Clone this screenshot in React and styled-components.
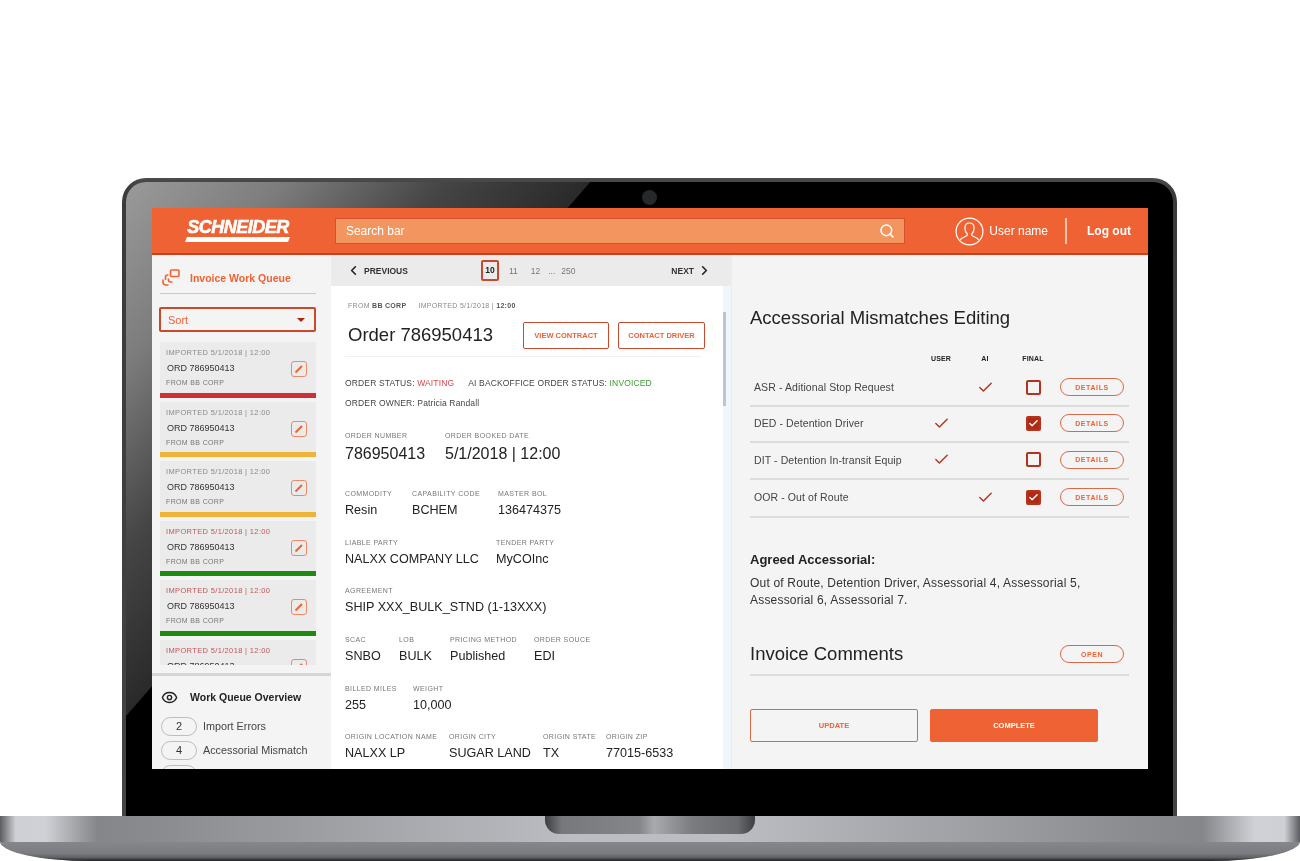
import React from 'react';
import styled, { createGlobalStyle } from 'styled-components';
import { ChevronLeft, ChevronRight, Search, Eye, Check } from 'lucide-react';

const GlobalStyle = createGlobalStyle`
  html, body { margin: 0; padding: 0; background: #fff; }
  body { font-family: "Liberation Sans", Arial, sans-serif; }
  * { box-sizing: border-box; }
`;

const orange = '#ef6234';
const rust = '#c9492a';

const Page = styled.div`
  width: 1300px;
  height: 861px;
  padding-top: 178px;
  overflow: hidden;
  background: #fff;
`;

const Lid = styled.div`
  position: relative;
  width: 1055px;
  height: 638px;
  margin-left: 122px;
  padding: 4px 4px 0 4px;
  border-radius: 24px 24px 0 0;
  background: linear-gradient(180deg, #4c4c4c 0, #3b3b3b 12px, #444 100%);
`;

const Bezel = styled.div`
  height: 100%;
  padding: 26px 25px 0 26px;
  border-radius: 20px 20px 0 0;
  background: linear-gradient(131deg, #9a9a9a 0%, #7c7c7c 10%, #454545 20%, #2a2a2a 29%, #000 29.1%);
`;

const Camera = styled.div`
  position: absolute;
  top: 12px;
  left: 520px;
  width: 15px;
  height: 15px;
  border-radius: 50%;
  background: #26282c;
`;

const Screen = styled.div`
  width: 996px;
  height: 561px;
  display: flex;
  flex-direction: column;
  overflow: hidden;
  background: #f4f4f4;
  filter: blur(0.35px);
`;

const Header = styled.header`
  flex: 0 0 47px;
  display: flex;
  align-items: center;
  padding: 1px 17px 0 34px;
  background: ${orange};
  border-bottom: 2px solid #c8401c;
`;

const Logo = styled.div`
  position: relative;
  width: 104px;
  height: 22px;
  color: #fff;
  font-size: 18px;
  line-height: 15px;
  font-weight: 700;
  font-style: italic;
  letter-spacing: -0.5px;
  -webkit-text-stroke: 0.6px #fff;
  white-space: nowrap;
  text-align: center;

  &::after {
    content: '';
    position: absolute;
    left: 0;
    right: 1px;
    bottom: 0;
    height: 5px;
    background: #fff;
    transform: skewX(-20deg);
  }
`;

const SearchBar = styled.div`
  width: 571px;
  height: 26px;
  margin-left: 45px;
  padding: 0 9px 0 10px;
  display: flex;
  align-items: center;
  justify-content: space-between;
  background: #f2955f;
  border: 1px solid #d4522c;
  color: #fff;
  font-size: 12px;
`;

const User = styled.div`
  display: flex;
  align-items: center;
  gap: 5px;
  margin-left: 50px;
  color: #fff;
  font-size: 12px;
  white-space: nowrap;
`;

const HeaderRule = styled.div`
  width: 2px;
  height: 26px;
  margin: 0 20px 0 17px;
  background: #f8c3a8;
`;

const LogOut = styled.div`
  color: #fff;
  font-size: 12px;
  font-weight: 700;
  white-space: nowrap;
`;

const Body = styled.div`
  flex: 1;
  min-height: 0;
  display: grid;
  grid-template-columns: 179px 400px 417px;
`;

const Sidebar = styled.aside`
  display: flex;
  flex-direction: column;
  min-height: 0;
  overflow: hidden;
  background: #f4f4f4;
`;

const QueuePane = styled.div`
  flex: 0 0 410px;
  padding: 0 15px 0 7px;
  overflow: hidden;
`;

const QueueTitle = styled.div`
  height: 39px;
  margin: 0 0 13px 1px;
  display: flex;
  align-items: center;
  gap: 10px;
  padding: 7px 0 0 2px;
  border-bottom: 1px solid #c9c9c9;
  color: ${orange};
  font-size: 10.5px;
  font-weight: 700;
`;

const Sort = styled.div`
  height: 25px;
  margin-bottom: 10px;
  padding: 0 9px 0 7px;
  display: flex;
  align-items: center;
  justify-content: space-between;
  border: 2px solid ${rust};
  border-radius: 2px;
  color: ${orange};
  font-size: 11px;
`;

const Caret = styled.span`
  width: 0;
  height: 0;
  border-left: 4px solid transparent;
  border-right: 4px solid transparent;
  border-top: 4px solid #b3200f;
`;

const Card = styled.div`
  position: relative;
  width: 156px;
  margin: 0 0 4px 1px;
  height: 55.5px;
  padding: 6px 0 0 6px;
  background: #ebebeb;
  border-bottom: 5px solid ${p => p.$bar};
`;

const CardStamp = styled.div`
  color: ${p => (p.$alert ? '#c0575a' : '#8a8a8a')};
  font-size: 7.5px;
  line-height: 10px;
  letter-spacing: 0.35px;
  white-space: nowrap;
`;

const CardOrder = styled.div`
  margin-top: 5px;
  margin-left: 1px;
  color: #333;
  font-size: 9px;
  line-height: 11px;
`;

const CardFrom = styled.div`
  margin-top: 4px;
  color: #777;
  font-size: 7px;
  line-height: 9px;
  letter-spacing: 0.35px;
`;

const EditBox = styled.div`
  position: absolute;
  top: 19px;
  right: 9px;
  width: 16px;
  height: 16px;
  border: 1.5px solid #ec8a68;
  border-radius: 3px;
  display: flex;
  align-items: center;
  justify-content: center;
`;

const Overview = styled.div`
  flex: 1;
  margin-top: 8px;
  padding: 14px 0 0 9px;
  border-top: 3px solid #d6d6d6;
`;

const OverviewTitle = styled.div`
  display: flex;
  align-items: center;
  gap: 12px;
  margin-bottom: 12px;
  color: #222;
  font-size: 10.5px;
  font-weight: 700;
  height: 14px;
`;

const CountRow = styled.div`
  display: flex;
  align-items: center;
  gap: 6px;
  height: 20px;
  margin-bottom: 4px;
  color: #444;
  font-size: 10.8px;
  white-space: nowrap;
`;

const CountPill = styled.span`
  width: 36px;
  height: 19px;
  border: 1px solid #bdbdbd;
  border-radius: 10px;
  text-align: center;
  line-height: 17px;
  color: #333;
  font-size: 11px;
`;

const Center = styled.main`
  position: relative;
  min-height: 0;
  overflow: hidden;
  background: #fff;
`;

const Pager = styled.div`
  height: 31px;
  padding: 0 19px 0 15px;
  display: flex;
  align-items: center;
  background: #ebebeb;
  color: #333;
  font-size: 8.5px;
  font-weight: 700;
`;

const PagerLink = styled.div`
  display: flex;
  align-items: center;
  gap: 3px;
`;

const Pages = styled.div`
  display: flex;
  align-items: center;
  margin-left: 73px;
  margin-right: auto;
  color: #777;
  font-size: 8.5px;
  font-weight: 400;
`;

const PageNum = styled.span`
  margin-left: ${p => p.$gap || 0}px;
  ${p => p.$current && `
    width: 18px;
    height: 21px;
    line-height: 17px;
    text-align: center;
    border: 2px solid ${rust};
    border-radius: 2px;
    color: #222;
    font-weight: 700;
  `}
`;

const Scrollbar = styled.div`
  position: absolute;
  top: 31px;
  right: 0;
  bottom: 0;
  width: 8px;
  padding-top: 26px;
  background: #f1f6fa;
`;

const ScrollThumb = styled.div`
  width: 3px;
  height: 94px;
  background: #b8c6d8;
`;

const Detail = styled.div`
  padding: 15px 20px 0 14px;
`;

const Crumb = styled.div`
  display: flex;
  gap: 12px;
  margin-left: 3px;
  height: 10px;
  color: #8a8a8a;
  font-size: 7px;
  line-height: 10px;
  letter-spacing: 0.3px;
  b { color: #555; }
`;

const OrderHead = styled.div`
  display: flex;
  align-items: center;
  gap: 9px;
  height: 34px;
  margin: 7px 0 4px 0;
  padding-left: 3px;
`;

const OrderTitle = styled.h1`
  flex: none;
  margin: 0 21px 0 0;
  width: 145px;
  white-space: nowrap;
  color: #222;
  font-size: 18.5px;
  font-weight: 400;
`;

const OutlineButton = styled.button`
  flex: none;
  width: ${p => p.$w}px;
  height: 27px;
  padding: 0;
  background: transparent;
  border: 1.5px solid ${rust};
  border-radius: 2px;
  color: ${orange};
  font: 700 7.5px "Liberation Sans", Arial, sans-serif;
`;

const HeadRule = styled.div`
  height: 1px;
  margin: 0 10px 19px 0;
  background: #f0f0f0;
`;

const StatusLine = styled.div`
  height: 20px;
  color: #444;
  font-size: 8.5px;
  line-height: 14px;
  letter-spacing: 0.15px;
  white-space: nowrap;
`;

const Status = styled.span`
  color: ${p => p.$c};
  margin-right: 14px;
`;

const FieldRow = styled.div`
  display: flex;
  margin-top: ${p => p.$top}px;
`;

const Field = styled.div`
  width: ${p => p.$w}px;
  flex: none;
  white-space: nowrap;
`;

const FieldLabel = styled.div`
  height: 11px;
  color: #777;
  font-size: 7px;
  line-height: 11px;
  letter-spacing: 0.4px;
`;

const FieldValue = styled.div`
  margin-top: ${p => (p.$big ? 4 : 3)}px;
  color: #222;
  font-size: ${p => (p.$big ? 16 : 12.6)}px;
  line-height: 17px;
`;

const Right = styled.section`
  padding: 52px 19px 0 18px;
  background: #f4f4f4;
  border-left: 1px solid #ececec;
`;

const PanelTitle = styled.h2`
  margin: 0;
  color: #222;
  font-size: 18.5px;
  font-weight: 400;
  line-height: 22px;
  white-space: nowrap;
`;

const TableHead = styled.div`
  display: grid;
  grid-template-columns: 169px 44px 44px 52px;
  margin-top: 26px;
  height: 16px;
  color: #222;
  font-size: 7px;
  font-weight: 700;
  text-align: center;
  letter-spacing: 0.2px;
`;

const Row = styled.div`
  display: grid;
  grid-template-columns: 169px 44px 44px 52px 66px;
  align-items: center;
  height: ${p => p.$h}px;
  padding-bottom: 2px;
  border-bottom: 2px solid #dcdcdc;
  color: #444;
  font-size: 10.5px;
  letter-spacing: 0.1px;
`;

const RowName = styled.span`
  padding-left: 4px;
  white-space: nowrap;
`;

const Cell = styled.span`
  display: flex;
  justify-content: center;
  align-items: center;
`;

const Box = styled.span`
  width: 15px;
  height: 15px;
  display: flex;
  align-items: center;
  justify-content: center;
  border: 2px solid #b5331e;
  border-radius: 2px;
  background: ${p => (p.$on ? '#ad2a14' : 'transparent')};
`;

const Pill = styled.button`
  width: 64px;
  height: 18px;
  padding: 0;
  background: transparent;
  border: 1.5px solid #d9694a;
  border-radius: 9px;
  color: ${orange};
  font: 700 7px "Liberation Sans", Arial, sans-serif;
  letter-spacing: 0.6px;
`;

const AgreedTitle = styled.div`
  margin-top: 34px;
  color: #222;
  font-size: 13px;
  font-weight: 700;
  line-height: 16px;
`;

const AgreedText = styled.p`
  margin: 7px 0 0;
  color: #333;
  font-size: 12px;
  line-height: 17px;
  letter-spacing: 0.19px;
  white-space: nowrap;
`;

const CommentsRow = styled.div`
  display: flex;
  align-items: center;
  justify-content: space-between;
  height: 36px;
  margin-top: 31px;
  padding: 0 5px 6px 0;
  border-bottom: 2px solid #dcdcdc;
`;

const Actions = styled.div`
  display: flex;
  gap: 12px;
  margin-top: 33px;
`;

const ActionButton = styled.button`
  width: 168px;
  height: 33px;
  padding: 0;
  background: ${p => (p.$primary ? orange : 'transparent')};
  border: 1.5px solid ${p => (p.$primary ? orange : '#d9694a')};
  border-radius: 2px;
  color: ${p => (p.$primary ? '#fff' : orange)};
  font: 700 7.5px "Liberation Sans", Arial, sans-serif;
`;

const Base = styled.div`
  position: relative;
  height: 45px;
  border-radius: 0 0 90px 90px / 0 0 20px 20px;
  overflow: hidden;
  background: linear-gradient(90deg, #5c5d61 0, #cfd0d5 1.2%, #d0d1d6 3.5%, #85868a 7.5%, #8a8b8f 12%, #bcbdc2 44%, #bcbdc2 56%, #8a8b8f 88%, #85868a 92.5%, #d0d1d6 96.5%, #cfd0d5 98.8%, #5c5d61 100%);
`;

const BaseLip = styled.div`
  position: absolute;
  left: 0;
  right: 0;
  top: 26px;
  bottom: 0;
  background: linear-gradient(180deg, #86878b 0%, #7b7c80 60%, #5f6064 82%, #1d1d20 100%);
`;

const Notch = styled.div`
  position: absolute;
  top: 0;
  left: 545px;
  width: 210px;
  height: 18px;
  border-radius: 0 0 14px 14px;
  background: linear-gradient(90deg, #3c3d41 0, #77787c 8%, #85868a 45%, #a9aaae 52%, #7b7c80 70%, #6a6b6f 92%, #3c3d41 100%);
`;

const queue = [
  { bar: '#cf3038' },
  { bar: '#efb437' },
  { bar: '#efb437' },
  { bar: '#1f8a10', alert: true },
  { bar: '#1f8a10', alert: true },
  { bar: '#1f8a10', alert: true },
];

const mismatches = [
  { name: 'ASR - Aditional Stop Request', ai: true, h: 36 },
  { name: 'DED - Detention Driver', user: true, on: true, h: 36 },
  { name: 'DIT - Detention In-transit Equip', user: true, h: 37 },
  { name: 'OOR - Out of Route', ai: true, on: true, h: 38 },
];

const fieldRows = [
  { top: 14, big: true, fields: [['ORDER NUMBER', '786950413', 100], ['ORDER BOOKED DATE', '5/1/2018 | 12:00', 150]] },
  { top: 26, fields: [['COMMODITY', 'Resin', 67], ['CAPABILITY CODE', 'BCHEM', 86], ['MASTER BOL', '136474375', 100]] },
  { top: 18, fields: [['LIABLE PARTY', 'NALXX COMPANY LLC', 151], ['TENDER PARTY', 'MyCOInc', 100]] },
  { top: 17, fields: [['AGREEMENT', 'SHIP XXX_BULK_STND (1-13XXX)', 300]] },
  { top: 18, fields: [['SCAC', 'SNBO', 54], ['LOB', 'BULK', 51], ['PRICING METHOD', 'Published', 84], ['ORDER SOUCE', 'EDI', 80]] },
  { top: 18, fields: [['BILLED MILES', '255', 68], ['WEIGHT', '10,000', 100]] },
  { top: 17, fields: [['ORIGIN LOCATION NAME', 'NALXX LP', 104], ['ORIGIN CITY', 'SUGAR LAND', 94], ['ORIGIN STATE', 'TX', 63], ['ORIGIN ZIP', '77015-6533', 80]] },
];

const QueueIcon = () => (
  <svg width="18" height="17" viewBox="0 0 18 17" fill="none" stroke={orange} strokeWidth="1.6">
    <rect x="8.500" y="1" width="8.500" height="6.500" rx="1" />
    <path d="M6.500 6H5.500a2 2 0 0 0-2 2v3M1 10.500v2.500a3 3 0 0 0 3 3h2.500M6.500 9.500v1.500a2 2 0 0 0 2 2h2" />
  </svg>
);

const UserIcon = () => (
  <svg width="29" height="29" viewBox="0 0 29 29" fill="none" stroke="#fff" strokeWidth="1.2">
    <circle cx="14.500" cy="14.500" r="13.400" />
    <path d="M14.500 6c-3 0-4.600 2.200-4.600 5 0 2.600 1 4.700 2.300 5.800v1.700L6.500 21.500c-.5.300-.8.800-.9 1.500M14.500 6c3 0 4.600 2.200 4.600 5 0 2.600-1 4.700-2.300 5.800v1.700l5.700 3c.5.300.8.800.9 1.500" />
  </svg>
);

const PencilIcon = () => (
  <svg width="10" height="10" viewBox="0 0 10 10" fill="none" stroke={orange} strokeWidth="2">
    <path d="M1.500 8.500L8 2" />
  </svg>
);

export default function App() {
  return (
    <Page>
      <GlobalStyle />
      <Lid>
        <Camera />
        <Bezel>
          <Screen>
            <Header>
              <Logo>SCHNEIDER</Logo>
              <SearchBar>
                Search bar
                <Search size={16} color="#fff" strokeWidth={2.2} />
              </SearchBar>
              <User>
                <UserIcon />
                User name
              </User>
              <HeaderRule />
              <LogOut>Log out</LogOut>
            </Header>
            <Body>
              <Sidebar>
                <QueuePane>
                  <QueueTitle>
                    <QueueIcon />
                    Invoice Work Queue
                  </QueueTitle>
                  <Sort>
                    Sort
                    <Caret />
                  </Sort>
                  {queue.map((item, i) => (
                    <Card key={i} $bar={item.bar}>
                      <CardStamp $alert={item.alert}>IMPORTED 5/1/2018 | 12:00</CardStamp>
                      <CardOrder>ORD 786950413</CardOrder>
                      <CardFrom>FROM BB CORP</CardFrom>
                      <EditBox>
                        <PencilIcon />
                      </EditBox>
                    </Card>
                  ))}
                </QueuePane>
                <Overview>
                  <OverviewTitle>
                    <Eye size={17} color="#222" strokeWidth={2} />
                    Work Queue Overview
                  </OverviewTitle>
                  <CountRow>
                    <CountPill>2</CountPill>
                    Import Errors
                  </CountRow>
                  <CountRow>
                    <CountPill>4</CountPill>
                    Accessorial Mismatch
                  </CountRow>
                  <CountRow>
                    <CountPill />
                  </CountRow>
                </Overview>
              </Sidebar>

              <Center>
                <Pager>
                  <PagerLink>
                    <ChevronLeft size={15} color="#222" strokeWidth={2.6} />
                    PREVIOUS
                  </PagerLink>
                  <Pages>
                    <PageNum $current>10</PageNum>
                    <PageNum $gap={10}>11</PageNum>
                    <PageNum $gap={13}>12</PageNum>
                    <PageNum $gap={8}>...</PageNum>
                    <PageNum $gap={6}>250</PageNum>
                  </Pages>
                  <PagerLink>
                    NEXT
                    <ChevronRight size={15} color="#222" strokeWidth={2.6} />
                  </PagerLink>
                </Pager>
                <Scrollbar>
                  <ScrollThumb />
                </Scrollbar>
                <Detail>
                  <Crumb>
                    <span>FROM <b>BB CORP</b></span>
                    <span>IMPORTED 5/1/2018 | <b>12:00</b></span>
                  </Crumb>
                  <OrderHead>
                    <OrderTitle>Order 786950413</OrderTitle>
                    <OutlineButton $w={86}>VIEW CONTRACT</OutlineButton>
                    <OutlineButton $w={87}>CONTACT DRIVER</OutlineButton>
                  </OrderHead>
                  <HeadRule />
                  <StatusLine>
                    ORDER STATUS: <Status $c="#e0454a">WAITING</Status>
                    AI BACKOFFICE ORDER STATUS: <Status $c="#3c9a32">INVOICED</Status>
                  </StatusLine>
                  <StatusLine>ORDER OWNER: Patricia Randall</StatusLine>
                  {fieldRows.map(row => (
                    <FieldRow key={row.fields[0][0]} $top={row.top}>
                      {row.fields.map(([label, value, w]) => (
                        <Field key={label} $w={w}>
                          <FieldLabel>{label}</FieldLabel>
                          <FieldValue $big={row.big}>{value}</FieldValue>
                        </Field>
                      ))}
                    </FieldRow>
                  ))}
                </Detail>
              </Center>

              <Right>
                <PanelTitle>Accessorial Mismatches Editing</PanelTitle>
                <TableHead>
                  <span />
                  <span>USER</span>
                  <span>AI</span>
                  <span>FINAL</span>
                </TableHead>
                {mismatches.map(m => (
                  <Row key={m.name} $h={m.h}>
                    <RowName>{m.name}</RowName>
                    <Cell>{m.user && <Check size={17} color="#b5331e" strokeWidth={2} />}</Cell>
                    <Cell>{m.ai && <Check size={17} color="#b5331e" strokeWidth={2} />}</Cell>
                    <Cell>
                      <Box $on={m.on}>{m.on && <Check size={11} color="#fff" strokeWidth={3} />}</Box>
                    </Cell>
                    <Cell>
                      <Pill>DETAILS</Pill>
                    </Cell>
                  </Row>
                ))}
                <AgreedTitle>Agreed Accessorial:</AgreedTitle>
                <AgreedText>
                  Out of Route, Detention Driver, Assessorial 4, Assessorial 5,
                  <br />
                  Assessorial 6, Assessorial 7.
                </AgreedText>
                <CommentsRow>
                  <PanelTitle>Invoice Comments</PanelTitle>
                  <Pill>OPEN</Pill>
                </CommentsRow>
                <Actions>
                  <ActionButton>UPDATE</ActionButton>
                  <ActionButton $primary>COMPLETE</ActionButton>
                </Actions>
              </Right>
            </Body>
          </Screen>
        </Bezel>
      </Lid>
      <Base>
        <BaseLip />
        <Notch />
      </Base>
    </Page>
  );
}
